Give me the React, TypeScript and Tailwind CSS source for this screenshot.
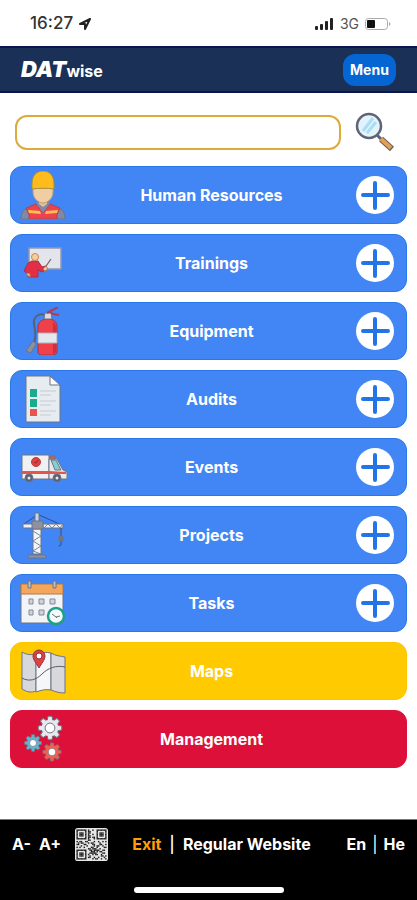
import React, { useState } from 'react';
import type { ReactNode } from 'react';
import clsx from 'clsx';

interface IconProps {
  children: ReactNode;
}

function RowIcon({ children }: IconProps) {
  return (
    <svg className="size-12 shrink-0" viewBox="0 0 48 48" fill="none" stroke="#6d7484" strokeWidth="1" strokeLinejoin="round" aria-hidden="true">
      {children}
    </svg>
  );
}

function WorkerIcon() {
  return (
    <RowIcon>
      <path d="M2 48c0-7 3-10 9-12l8-4h10l8 4c6 2 9 5 9 12z" fill="#8289a3" />
      <path d="M10 48V44l-3-7 10-4 7 9 7-9 10 4-3 7v4z" fill="#f0414f" stroke="#a04a60" />
      <path d="M9 39l12 1 1 3-12-1zM39 39l-12 1-1 3 12-1z" fill="#f9c04c" stroke="none" />
      <path d="M17 32l7 10 7-10-3-2h-8z" fill="#8289a3" stroke="none" />
      <path d="M20 27h8v6l-4 3-4-3z" fill="#e6c096" stroke="none" />
      <path d="M14 15v6c0 7 6 11 10 11s10-4 10-11v-6z" fill="#efcea3" stroke="#b79f83" />
      <path d="M13 18v-5C13 5 17 0 24 0s11 5 11 13v5c-7-1-15-1-22 0z" fill="#fdbb1c" stroke="#a98c3c" />
    </RowIcon>
  );
}

function TrainingIcon() {
  return (
    <RowIcon>
      <path d="M10 9h32v21H10z" fill="#e4e5ec" stroke="#9199ab" strokeWidth="1.5" />
      <path d="M25 30l7-10" stroke="#6a6257" strokeWidth="1.2" />
      <path d="M9 38v-3l-4-3 4-8 4-2h6l4 6 4-1 1 3-5 3-4-2v7z" fill="#e22f45" stroke="#a23350" />
      <path d="M8 34l3 1v3l-3-2zM24 30l3-3 2 3-3 2z" fill="#f4c78f" stroke="#b77e58" />
      <circle cx="16" cy="18" r="3.5" fill="#f6cf96" stroke="#c08a5a" />
    </RowIcon>
  );
}

function ExtinguisherIcon() {
  return (
    <RowIcon>
      <path d="M27 8c-8-3-13 3-12 9 1 7 3 12 0 18" stroke="#596078" strokeWidth="2" />
      <path d="M14 34l3 3-5 9-5-2z" fill="#8e909b" />
      <path d="M19 20c0-5 4-8 10-8s9 3 9 8v25c0 2-2 3-4 3H23c-2 0-4-1-4-3z" fill="#f0414b" stroke="#a63345" />
      <path d="M34 15c2 2 3 3 3 5v24c0 2-1 3-3 3z" fill="#cf303f" stroke="none" />
      <path d="M19 26h19v10H19z" fill="#e4e8ed" stroke="#a9b0be" />
      <path d="M26 6h6l1 6h-8z" fill="#d9dce4" />
      <path d="M28 6L39 0M30 4l4 3 6 1" stroke="#a83f5c" strokeWidth="2" />
    </RowIcon>
  );
}

function AuditIcon() {
  return (
    <RowIcon>
      <path d="M7 1h24l10 9v37H7z" fill="#e6ecf0" stroke="#6b7484" />
      <path d="M31 1v9h10z" fill="#fff" stroke="#6b7484" />
      <g stroke="none">
        <path d="M11 14h7v8h-7zM11 24h7v8h-7z" fill="#1bac8d" />
        <path d="M11 34h7v7h-7z" fill="#e8544f" />
      </g>
      <path d="M21 16h16M21 20h11M21 26h16M21 30h11M21 36h16M21 40h11" stroke="#c5cbd3" />
    </RowIcon>
  );
}

function AmbulanceIcon() {
  return (
    <RowIcon>
      <path d="M3 12h27v24H3z" fill="#f1f1f4" />
      <path d="M30 16h8l6 11 4 2v7H30z" fill="#e8eaf0" />
      <path d="M32 17h5l5 10h-6z" fill="#83cfcf" />
      <path d="M31 13h5v3h-5z" fill="#e2574c" />
      <path d="M3 28h27l17 1v2H3z" fill="#e2574c" stroke="none" />
      <circle cx="17" cy="19" r="4.5" fill="#e2403f" stroke="#b63a43" />
      <path d="M15 19l2 1 2-3" stroke="#8c2b3a" />
      <circle cx="10" cy="35" r="4" fill="#5a6073" />
      <circle cx="38" cy="35" r="4" fill="#5a6073" />
      <circle cx="10" cy="35" r="1.5" fill="#e4e6ec" stroke="none" />
      <circle cx="38" cy="35" r="1.5" fill="#e4e6ec" stroke="none" />
    </RowIcon>
  );
}

function CraneIcon() {
  return (
    <RowIcon>
      <path d="M18 4L5 13M20 4l23 10" stroke="#2f4d94" />
      <path d="M16 2h4v9h-4z" fill="#c9d6e6" />
      <path d="M4 13h10v4H4z" fill="#eceef3" />
      <path d="M24 13h20v4H24z" fill="#eceef3" />
      <path d="M25 17l4-4 4 4 4-4 4 4 3-4" stroke="#7b8496" />
      <path d="M14 18h8v25h-8z" fill="#f4f5f8" />
      <path d="M14 20l8 5-8 5 8 5-8 5 8 3" stroke="#7b8496" />
      <path d="M13 10h11v8H13z" fill="#8d91a0" />
      <path d="M9 44h18v3H9z" fill="#8d91a0" />
      <path d="M42 17v9M42 30v3c0 2-2 3-2 1" stroke="#3c4a75" />
      <path d="M40 25h4v5h-4z" fill="#6d7690" />
    </RowIcon>
  );
}

function CalendarIcon() {
  return (
    <RowIcon>
      <path d="M2 5h42v39H2z" fill="#f3f4f7" />
      <path d="M2 5h42v10H2z" fill="#f4a75a" stroke="#b07a4d" />
      <path d="M9 2h3v7H9zM34 2h3v7h-3z" fill="#b9bfca" />
      <path d="M10 20h4v5h-4zM20 20h5v5h-5zM31 20h5v5h-5zM10 31h4v5h-4zM20 31h5v5h-5z" fill="#cfd3da" stroke="#838a97" />
      <circle cx="37" cy="37" r="8" fill="#f4fbf9" stroke="#1aa18c" strokeWidth="2.5" />
      <path d="M33 35l4 3 4-1M37 38l1 1" stroke="#687080" />
    </RowIcon>
  );
}

function MapIcon() {
  return (
    <RowIcon>
      <path d="M3 5c5 3 9 3 14 2v37c-5 2-9 1-14-2z" fill="#d8d8dc" />
      <path d="M17 7c5-2 10-2 15-1v37c-5-1-10 0-15 2z" fill="#f6f6f8" />
      <path d="M32 6c5 3 9 3 14 4v36c-5 0-9-1-14-3z" fill="#d8d8dc" />
      <path d="M3 31c7 4 14 2 20-4s14-9 23-7" stroke="#555b68" />
      <path d="M20 21c-2-4-6-8-6-12a6 6 0 0 1 12 0c0 4-4 8-6 12z" fill="#e2403f" stroke="#8a3440" />
      <circle cx="20" cy="9" r="3" fill="#fff" stroke="#8a3440" />
    </RowIcon>
  );
}

interface GearProps {
  x: number;
  y: number;
  scale: number;
  fill: string;
}

const TOOTH_ANGLES = [0, 45, 90, 135, 180, 225, 270, 315];

function Gear({ x, y, scale, fill }: GearProps) {
  return (
    <g transform={`translate(${x} ${y}) scale(${scale})`}>
      {TOOTH_ANGLES.map((angle) => (
        <path key={angle} d="M-3-7l1-5h4l1 5z" fill={fill} transform={`rotate(${angle})`} />
      ))}
      <circle r="8.5" fill={fill} stroke="none" />
      <circle r="5" fill="#fff" />
    </g>
  );
}

function GearsIcon() {
  return (
    <RowIcon>
      <Gear x={31} y={13} scale={0.98} fill="#e8e9ed" />
      <Gear x={14} y={28} scale={0.7} fill="#63b5cf" />
      <Gear x={33} y={37} scale={0.76} fill="#f0624f" />
    </RowIcon>
  );
}

function MagnifierIcon() {
  return (
    <svg className="size-10" viewBox="0 0 40 40" fill="none" aria-hidden="true">
      <path d="M22 23l4 4" stroke="#5f6377" strokeWidth="3" />
      <path d="M26 27l11 10" stroke="#6d5f5c" strokeWidth="6" />
      <path d="M26 27l10 9" stroke="#e2a052" strokeWidth="4" />
      <circle cx="14" cy="14" r="12" fill="#e3f3fb" stroke="#5f6377" strokeWidth="2.5" />
      <path d="M8 19L18 6M12 21l9-11" stroke="#a9def5" strokeWidth="3" />
    </svg>
  );
}

function PlusIcon() {
  return (
    <svg className="size-[38px] shrink-0" viewBox="0 0 38 38" aria-hidden="true">
      <circle cx="19" cy="19" r="19" fill="#fff" />
      <path d="M19 7v25M7 19h25" stroke="#2374e6" strokeWidth="4" strokeLinecap="round" />
    </svg>
  );
}

// 21x21 modules, '1' is a dark module
const QR_ROWS = [
  '111111101001001111111',
  '100000101100001000001',
  '101110101100001011101',
  '101110101001001011101',
  '101110101100001011101',
  '100000101101101000001',
  '111111101000101111111',
  '000000001100000000000',
  '101100110000100100101',
  '010110001011000010000',
  '110001100001100011001',
  '000100010000101100100',
  '101001000011001000011',
  '000000001101110010000',
  '111111100110111100110',
  '100000100011101011000',
  '101110100111110000110',
  '101110101001011001000',
  '101110100100000001101',
  '100000101100100100010',
  '111111100001011001001',
];

function QrIcon() {
  return (
    <svg className="size-[33px]" viewBox="-1 -1 23 23" aria-hidden="true">
      <rect x="-1" y="-1" width="23" height="23" rx="2" fill="#e6e6e6" />
      {QR_ROWS.map((row, y) =>
        row.split('').map((cell, x) =>
          cell === '1' ? <rect key={`${x}-${y}`} x={x} y={y} width="1" height="1" fill="#1c1c1c" /> : null
        )
      )}
    </svg>
  );
}

function StatusBar() {
  return (
    <div className="flex h-[46px] items-center justify-between pt-[2px] pr-[26px] pl-[30px] text-[#333]">
      <div className="flex items-center gap-[5px]">
        <span className="text-[17px] font-medium">16:27</span>
        <svg className="size-[14px]" viewBox="0 0 14 14" fill="none" stroke="#222" strokeWidth="2" strokeLinejoin="round" aria-hidden="true">
          <path d="M12 2L2 7h5v5z" />
        </svg>
      </div>
      <div className="flex items-center gap-[6px]">
        <svg className="h-3 w-[19px]" viewBox="0 0 19 12" fill="#222" aria-hidden="true">
          <rect x="0" y="8" width="3" height="4" rx="1" />
          <rect x="5" y="6" width="3" height="6" rx="1" />
          <rect x="10" y="3" width="3" height="9" rx="1" />
          <rect x="15" y="0" width="3" height="12" rx="1" />
        </svg>
        <span className="text-sm text-[#555]">3G</span>
        <svg className="h-3 w-[26px]" viewBox="0 0 26 12" fill="none" aria-hidden="true">
          <rect x="0.500" y="0.500" width="22" height="11" rx="3" stroke="#aaa" />
          <rect x="2" y="2" width="8" height="8" rx="1" fill="#111" />
          <path d="M24 4c2 1 2 3 0 4z" fill="#aaa" />
        </svg>
      </div>
    </div>
  );
}

type Tone = 'blue' | 'yellow' | 'red';

interface Section {
  label: string;
  icon: ReactNode;
  tone: Tone;
}

const sections: Section[] = [
  { label: 'Human Resources', icon: <WorkerIcon />, tone: 'blue' },
  { label: 'Trainings', icon: <TrainingIcon />, tone: 'blue' },
  { label: 'Equipment', icon: <ExtinguisherIcon />, tone: 'blue' },
  { label: 'Audits', icon: <AuditIcon />, tone: 'blue' },
  { label: 'Events', icon: <AmbulanceIcon />, tone: 'blue' },
  { label: 'Projects', icon: <CraneIcon />, tone: 'blue' },
  { label: 'Tasks', icon: <CalendarIcon />, tone: 'blue' },
  { label: 'Maps', icon: <MapIcon />, tone: 'yellow' },
  { label: 'Management', icon: <GearsIcon />, tone: 'red' },
];

const toneClasses: Record<Tone, string> = {
  blue: 'border-[#2878e8] bg-[#4285f4]',
  yellow: 'border-[#fdc400] bg-[#ffcb00]',
  red: 'border-[#dc1039] bg-[#dc1039]',
};

function SectionButton({ label, icon, tone }: Section) {
  return (
    <button
      type="button"
      className={clsx(
        'flex h-[58px] w-full items-center rounded-xl border pr-3 pl-2 text-base font-bold text-white',
        toneClasses[tone]
      )}
    >
      {icon}
      <span className="flex-1 text-center">{label}</span>
      {tone === 'blue' ? <PlusIcon /> : <span className="w-[38px]" />}
    </button>
  );
}

export default function App() {
  const [query, setQuery] = useState('');

  return (
    <div className="flex min-h-screen flex-col bg-white font-['Inter','Liberation_Sans',sans-serif]">
      <StatusBar />

      <header className="flex h-[47px] items-center justify-between border-y-2 border-[#0b1650] bg-[#1a3057] px-[21px] text-white">
        <div className="flex items-baseline">
          <span className="text-[22px] font-black italic">DAT</span>
          <span className="text-base font-bold">wise</span>
        </div>
        <button type="button" className="h-8 w-[53px] rounded-xl bg-[#0565d2] text-sm font-bold">
          Menu
        </button>
      </header>

      <main className="px-[10px] pb-6">
        <form className="flex items-center gap-[14px] pt-[19px] pr-3 pb-[14px] pl-[5px]" onSubmit={(e) => e.preventDefault()}>
          <input
            type="search"
            aria-label="Search"
            value={query}
            onChange={(e) => setQuery(e.target.value)}
            className="h-[35px] min-w-0 flex-1 rounded-xl border-2 border-[#dcab3c] bg-white px-3 text-base outline-none"
          />
          <button type="submit" aria-label="Run search">
            <MagnifierIcon />
          </button>
        </form>

        <nav className="flex flex-col gap-[10px]">
          {sections.map((section) => (
            <SectionButton key={section.label} {...section} />
          ))}
        </nav>
      </main>

      <footer className="mt-auto border-t border-[#777] bg-black px-3 pb-[7px] text-base font-bold text-white">
        <div className="flex h-12 items-center">
          <div className="flex items-center">
            <button type="button">A-</button>
            <button type="button" className="ml-2">A+</button>
            <a href="#qr" aria-label="QR code" className="ml-[14px]">
              <QrIcon />
            </a>
          </div>
          <div className="ml-6 flex gap-2">
            <a href="#exit" className="text-[#ff9d0a]">Exit</a>
            <span className="font-medium">|</span>
            <a href="#website">Regular Website</a>
          </div>
          <div className="ml-auto flex gap-[6px]">
            <a href="#en">En</a>
            <span className="font-normal">|</span>
            <a href="#he">He</a>
          </div>
        </div>
        <div className="mx-auto mt-[19px] h-[6px] w-[150px] rounded-full bg-white" />
      </footer>
    </div>
  );
}
